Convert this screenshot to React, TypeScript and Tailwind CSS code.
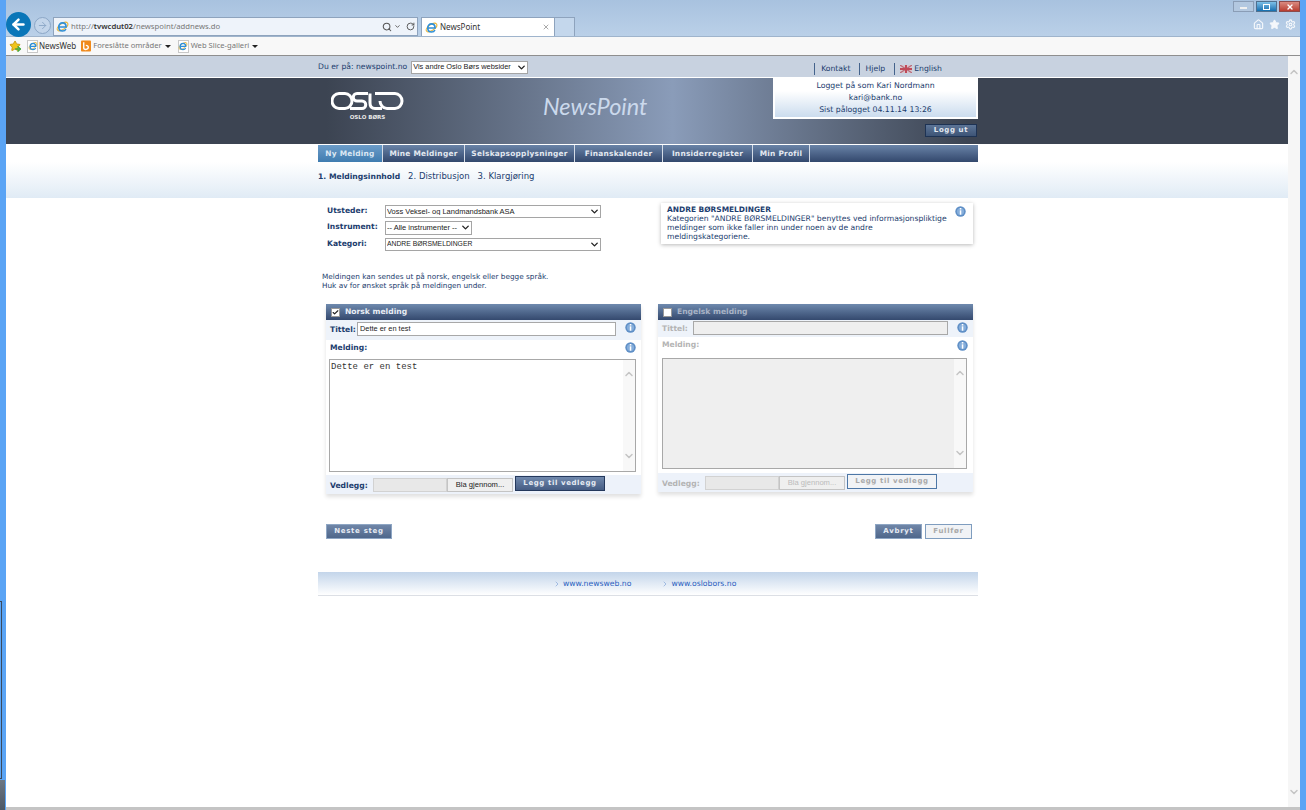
import { ChevronDown, ChevronUp, ChevronRight, ArrowLeft, ArrowRight, Search, RotateCw, X, Home, Star, Settings, Check } from 'lucide-react'

const navItems = [
  { label: 'Ny Melding', width: 'w-[65px]' },
  { label: 'Mine Meldinger', width: 'w-[82px]' },
  { label: 'Selskapsopplysninger', width: 'w-[110px]' },
  { label: 'Finanskalender', width: 'w-[88px]' },
  { label: 'Innsiderregister', width: 'w-[90px]' },
  { label: 'Min Profil', width: 'w-[57px]' },
]

function IeLogo({ size = 14 }: { size?: number }) {
  return (
    <svg width={size} height={size} viewBox="0 0 16 16" className="shrink-0">
      <ellipse cx="8" cy="8" rx="7.5" ry="3.6" transform="rotate(-35 8 8)" fill="none" stroke="#e8b53a" strokeWidth="1.4" />
      <path d="M3.6 8.6h8.8c0-3-1.8-5-4.4-5s-4.6 2.2-4.6 5c0 2.9 2 5 4.7 5 1.9 0 3.4-.9 4.1-2.5" fill="none" stroke="#2f8fd8" strokeWidth="2" />
    </svg>
  )
}

function IePage() {
  return (
    <span className="relative flex h-[13px] w-[11px] shrink-0 items-center justify-center border border-[#c8c8c8] bg-white">
      <IeLogo size={10} />
    </span>
  )
}

function BingIcon() {
  return (
    <svg width="10" height="12" viewBox="0 0 11 12" className="shrink-0">
      <rect width="11" height="12" rx="1" fill="#f08a1d" />
      <path d="M3 2v6.2c0 1 1 1.6 2.2 1.6C6.900 9.800 8 8.800 8 7.500S6.800 5.300 5.300 5.300" fill="none" stroke="#fff" strokeWidth="1.5" />
    </svg>
  )
}

function FavStar() {
  return (
    <span className="relative h-[13px] w-[13px] shrink-0">
      <Star className="h-[12px] w-[12px] fill-[#f0c419] text-[#c99a10]" />
      <ArrowRight className="absolute bottom-0 right-0 h-[8px] w-[8px] text-[#3fa83a]" strokeWidth={4} />
    </span>
  )
}

function InfoIcon() {
  return (
    <svg width="11" height="11" viewBox="0 0 11 11" className="shrink-0">
      <circle cx="5.5" cy="5.5" r="5.2" fill="#5f8fc6" />
      <circle cx="5.5" cy="5.5" r="3.6" fill="#86aedb" />
      <rect x="4.8" y="2" width="1.5" height="1.5" fill="#fff" />
      <rect x="4.8" y="4.3" width="1.5" height="4.4" fill="#fff" />
    </svg>
  )
}

function OsloLogo() {
  return (
    <svg width="73" height="18" viewBox="0 0 73 18" fill="none" stroke="#fff" strokeWidth="3">
      <path d="M8 1.500h6a7 7.500 0 0 1 0 15H8a7 7.500 0 0 1 0-15z" />
      <path d="M37 1.500H26a3.700 3.700 0 0 0 0 7.500h5a3.700 3.700 0 0 1 0 7.500H19" />
      <path d="M39 1.500v9.500c0 3.500 2 5.500 5 5.500h7" />
      <path d="M44 1.500h20a7 7.500 0 0 1 0 15H56a7 7.500 0 0 1-7-7.500" />
    </svg>
  )
}

function UkFlag() {
  return (
    <svg width="12" height="8" viewBox="0 0 12 8" className="mr-[2px] shrink-0">
      <rect width="12" height="8" fill="#d8c4cc" />
      <path d="M0 0l12 8M12 0L0 8" stroke="#b86a78" strokeWidth="1.2" />
      <path d="M6 0v8M0 4h12" stroke="#c04a58" strokeWidth="2" />
    </svg>
  )
}

function Select({ label, width, height = 'h-[13px]', size = 'text-[7.5px]' }: { label: string; width: string; height?: string; size?: string }) {
  return (
    <div className={`relative ${height} ${width}`}>
      <select className={`h-full w-full appearance-none border border-[#a5a5a5] bg-white pl-[1px] font-['Liberation_Sans',sans-serif] font-normal leading-none text-[#222] outline-none ${size}`}>
        <option>{label}</option>
      </select>
      <ChevronDown className="pointer-events-none absolute right-[1px] top-[1px] h-[11px] w-[11px] text-[#222]" strokeWidth={3} />
    </div>
  )
}

function MessagePanel({ title, checked, value, text }: { title: string; checked: boolean; value: string; text: string }) {
  const label = checked ? 'text-[#1c3d6e]' : 'text-[#b4b4b4]'
  return (
    <div className="flex w-[315px] flex-col shadow-[0_3px_4px_rgba(0,0,0,0.12)]">
      <div className="flex h-[16px] items-center gap-[5px] bg-gradient-to-b from-[#6f8aae] to-[#34496e] pl-[5px]">
        <span className="flex h-[9px] w-[9px] items-center justify-center border border-[#999] bg-white">
          {checked && <Check className="h-[9px] w-[9px] text-[#222]" strokeWidth={4} />}
        </span>
        <span className={`text-[7.6px] font-bold ${checked ? 'text-[#e8edf5]' : 'text-[#a9b4c6]'}`}>{title}</span>
      </div>
      <div className={`flex items-center bg-[#eef3fa] pl-[4px] pr-[5px] ${checked ? 'h-[20px]' : 'h-[17px]'}`}>
        <span className={`w-[27px] text-[7.6px] font-bold ${label}`}>Tittel:</span>
        <input
          readOnly
          value={value}
          className={`h-[14px] flex-1 border border-[#a8a8a8] px-[2px] font-['Liberation_Sans',sans-serif] text-[7.4px] text-[#222] outline-none ${checked ? 'mb-[3px] bg-white' : 'mb-[2px] ml-[4px] bg-[#efefef]'}`}
        />
        <span className={`ml-[9px] ${checked ? 'mb-[5px]' : 'mb-[2px]'}`}><InfoIcon /></span>
      </div>
      <div className={`flex items-center justify-between bg-white pl-[4px] pr-[5px] ${checked ? 'h-[15px]' : 'h-[16px]'}`}>
        <span className={`text-[7.6px] font-bold ${label}`}>Melding:</span>
        <InfoIcon />
      </div>
      <div className={`bg-white ${checked ? 'pb-[3px] pl-[3px] pr-[5px] pt-[4px]' : 'pb-[4px] pl-[4px] pr-[6px] pt-[5px]'}`}>
        <div className={`relative border border-[#a8a8a8] ${checked ? 'h-[113px] bg-white' : 'h-[111px] bg-[#efefef]'}`}>
          <textarea
            readOnly
            value={text}
            className="h-full w-full resize-none overflow-hidden bg-transparent px-[1px] pt-[2px] font-['Liberation_Mono',monospace] text-[9px] leading-[11px] text-[#333] outline-none"
          />
          <div className="absolute bottom-0 right-0 top-0 flex w-[12px] flex-col items-center justify-between bg-[#f8f8f8] pb-[9px] pt-[8px] text-[#c4c4c4]">
            <ChevronUp className="h-[12px] w-[12px]" strokeWidth={3} />
            <ChevronDown className="h-[12px] w-[12px]" strokeWidth={3} />
          </div>
        </div>
      </div>
      <div className="flex h-[19px] items-center bg-[#edf2fa] pl-[4px]">
        <span className={`mt-[3px] w-[43px] text-[7.6px] font-bold ${label}`}>Vedlegg:</span>
        <div className="mt-[1px] h-[14px] w-[74px] border border-[#d2d2d2] bg-[#e8e8e8]" />
        <div className={`mt-[1px] flex h-[14px] w-[66px] items-center justify-center border border-[#c4c4c4] bg-[#efefef] font-['Liberation_Sans',sans-serif] text-[7.6px] ${checked ? 'text-[#222]' : 'text-[#bbb]'}`}>Bla gjennom...</div>
        <button className={`mb-[2px] ml-[2px] h-[15px] w-[90px] border text-[7px] font-bold tracking-[0.6px] ${checked ? 'border-[#24385c] bg-gradient-to-b from-[#7088ac] to-[#465d84] text-[#e6ebf3]' : 'border-[#4d77a6] bg-[#f1f3f6] text-[#a9a9a9]'}`}>Legg til vedlegg</button>
      </div>
    </div>
  )
}

export default function App() {
  return (
    <div className="relative flex h-[810px] w-[1306px] overflow-hidden bg-[#5aa4f5] font-['DejaVu_Sans',Verdana,sans-serif]">
      <div className="ml-[6px] flex w-[1294px] flex-col bg-white">
        {/* browser chrome */}
        <div className="flex h-[37px] justify-between border-b border-[#9fb4cc] bg-gradient-to-b from-[#a8c2df] to-[#bad0e8] font-['Noto_Sans',sans-serif]">
          <div className="flex items-end">
            <span className="relative z-10 -mb-[1px] flex h-[25px] w-[25px] items-center justify-center rounded-full bg-[#0a76b8]">
              <ArrowLeft className="h-[17px] w-[17px] text-white" strokeWidth={3.5} />
            </span>
            <span className="mb-[2px] ml-[3px] flex h-[17px] w-[17px] items-center justify-center rounded-full border border-[#8ba6c6] bg-[#c3d5ea]">
              <ArrowRight className="h-[11px] w-[11px] text-[#8ba6c6]" strokeWidth={2} />
            </span>
            <div className="ml-[2px] flex h-[19px] w-[365px] items-center border border-[#8ea3bd] bg-[#eef3fa] pl-[2px] pr-[2px] text-[7.7px] text-[#777]">
              <IeLogo size={13} />
              <span className="ml-[2px]">http://<b className="font-semibold text-[#333]">tvwcdut02</b>/newspoint/addnews.do</span>
              <span className="ml-auto flex items-center gap-[2px] text-[#555]">
                <Search className="h-[10px] w-[10px]" strokeWidth={2.5} />
                <ChevronDown className="h-[7px] w-[7px]" strokeWidth={3} />
                <RotateCw className="ml-[3px] h-[9px] w-[9px]" strokeWidth={2.5} />
              </span>
            </div>
            <div className="ml-[3px] flex h-[19px] w-[134px] items-center border border-b-0 border-[#8ea3bd] bg-white pl-[3px] pr-[4px] text-[8px] text-[#333]">
              <IeLogo size={13} />
              <span className="ml-[2px]">NewsPoint</span>
              <X className="ml-auto h-[8px] w-[8px] text-[#aaa]" strokeWidth={3} />
            </div>
            <div className="h-[19px] w-[20px] border border-b-0 border-l-0 border-[#8ea3bd] bg-[#c4d7ec]" />
          </div>
          <div className="flex flex-col items-end pt-[1px]">
            <div className="flex gap-[2px]">
              <span className="flex h-[11px] w-[21px] items-end justify-center border border-[#8a9db6] bg-[#b3c8e0] pb-[2px]"><span className="h-[2px] w-[7px] bg-[#f0f0f0]" /></span>
              <span className="flex h-[11px] w-[21px] items-center justify-center border border-[#50708f] bg-gradient-to-b from-[#7cc0e8] to-[#0f6fb0]"><span className="h-[6px] w-[7px] border border-white" /></span>
              <span className="flex h-[11px] w-[21px] items-center justify-center border border-[#8c4a4a] bg-gradient-to-b from-[#d98a80] to-[#b83c30]"><X className="h-[8px] w-[8px] text-white" strokeWidth={4} /></span>
            </div>
            <div className="mr-[4px] mt-[7px] flex gap-[5px] text-[#f4f7fb]">
              <Home className="h-[11px] w-[11px]" strokeWidth={2.5} />
              <Star className="h-[11px] w-[11px] fill-[#f4f7fb]" strokeWidth={2} />
              <Settings className="h-[11px] w-[11px]" strokeWidth={2.5} />
            </div>
          </div>
        </div>
        <div className="flex h-[19px] items-center border-b border-[#8f8f8f] bg-[#f8f8f8] pl-[3px] font-['Noto_Sans',sans-serif] text-[7.6px] text-[#777]">
          <FavStar />
          <span className="ml-[5px]"><IePage /></span>
          <span className="ml-[1px] text-[8px] text-[#333]">NewsWeb</span>
          <span className="ml-[5px]"><BingIcon /></span>
          <span className="ml-[2px]">Foreslåtte områder</span>
          <span className="ml-[3px] h-0 w-0 border-x-[3px] border-t-[3px] border-x-transparent border-t-[#222]" />
          <span className="ml-[7px]"><IePage /></span>
          <span className="ml-[2px]">Web Slice-galleri</span>
          <span className="ml-[3px] h-0 w-0 border-x-[3px] border-t-[3px] border-x-transparent border-t-[#222]" />
        </div>

        <div className="flex flex-1">
          {/* page */}
          <div className="flex w-[1282px] flex-col">
            <div className="h-[22px] border-b border-white bg-[#c8d2e0]">
              <div className="ml-[312px] flex h-full w-[660px] items-center pt-[1px] text-[7.65px] text-[#1c3d6e]">
                <span>Du er på: newspoint.no</span>
                <div className="ml-[4px]"><Select label="Vis andre Oslo Børs websider" width="w-[117px]" size="text-[7.4px]" /></div>
                <div className="ml-auto mr-[36px] mt-[4px] flex items-center text-[7.7px]">
                  <span className="border-l border-[#44638c] pl-[6px]">Kontakt</span>
                  <span className="ml-[8px] border-l border-[#44638c] pl-[6px]">Hjelp</span>
                  <span className="ml-[9px] flex items-center border-l border-[#44638c] pl-[5px]"><UkFlag />English</span>
                </div>
              </div>
            </div>
            <div className="mb-[1px] h-[66px] bg-gradient-to-r from-[#3c4452] from-[25%] via-[#8a9cb9] via-[52%] to-[#3c4452] to-[75%]">
              <div className="ml-[312px] flex h-full w-[660px]">
                <div className="ml-[13px] mt-[14px] flex w-[73px] flex-col items-center">
                  <OsloLogo />
                  <span className="mt-[3px] text-[5.5px] font-bold text-[#e8e8e8]">OSLO BØRS</span>
                </div>
                <span className="ml-[139px] mt-[13px] font-['Lato',sans-serif] text-[23.500px] italic leading-[30px] text-[#cbd9ec]">NewsPoint</span>
                <div className="ml-auto flex w-[205px] flex-col items-end">
                  <div className="-mt-px flex h-[42px] w-full flex-col items-center justify-center border-2 border-t-0 border-white bg-gradient-to-b from-white from-[35%] to-[#cbdcee] pt-[1px] text-[7.75px] leading-[12px] text-[#1c3d6e]">
                    <span>Logget på som Kari Nordmann</span>
                    <span>kari@bank.no</span>
                    <span>Sist pålogget 04.11.14 13:26</span>
                  </div>
                  <button className="mr-[1px] mt-[5px] h-[13px] w-[52px] border border-[#1e3354] bg-gradient-to-b from-[#5d7597] to-[#3d5476] text-[7px] font-bold tracking-[0.6px] text-[#e4e9f1]">Logg ut</button>
                </div>
              </div>
            </div>
            <div className="ml-[312px] flex h-[17px] w-[660px] bg-gradient-to-b from-[#6a84a8] to-[#33486d]">
              {navItems.map((item, i) => (
                <div key={item.label} className={`flex h-full items-center justify-center border-r border-[#d5dce6] text-[7.4px] font-bold tracking-[0.25px] ${item.width} ${i === 0 ? 'bg-gradient-to-b from-[#6c9cc8] to-[#3f7cb0] text-[#dce8f4]' : 'text-[#e4e9f1]'}`}>
                  {item.label}
                </div>
              ))}
            </div>
            <div className="h-[36px] bg-gradient-to-b from-white to-[#e0ebf5]">
              <div className="ml-[312px] flex w-[660px] gap-[8px] pt-[8px] text-[8.5px] text-[#1c3d6e]">
                <b className="text-[7.65px] leading-[13px]">1. Meldingsinnhold</b>
                <span>2. Distribusjon</span>
                <span>3. Klargjøring</span>
              </div>
            </div>

            <div className="ml-[312px] w-[660px] pl-[8px]">
              <div className="flex pt-[7px]">
                <div className="ml-[1px] grid w-[274px] grid-cols-[58px_auto] content-start justify-start gap-y-[3px] text-[7.6px] font-bold text-[#1c3d6e]">
                  <span className="leading-[11px]">Utsteder:</span>
                  <Select label="Voss Veksel- og Landmandsbank ASA" width="w-[216px]" />
                  <span className="leading-[11px]">Instrument:</span>
                  <Select label="-- Alle instrumenter --" width="w-[87px]" height="h-[14px]" />
                  <span className="leading-[11px]">Kategori:</span>
                  <Select label="ANDRE BØRSMELDINGER" width="w-[216px]" size="text-[6.8px]" />
                </div>
                <div className="-mt-[2px] ml-[60px] flex h-[41px] w-[312px] items-start bg-white pl-[6px] pr-[7px] pt-[2px] text-[7.65px] leading-[9px] text-[#1c3d6e] shadow-[0_1px_4px_rgba(0,0,0,0.28)]">
                  <div className="flex-1">
                    <b className="block text-[7.45px]">ANDRE BØRSMELDINGER</b>
                    Kategorien "ANDRE BØRSMELDINGER" benyttes ved informasjonspliktige<br />
                    meldinger som ikke faller inn under noen av de andre<br />
                    meldingskategoriene.
                  </div>
                  <span className="mt-[1px]"><InfoIcon /></span>
                </div>
              </div>
              <p className="-ml-[4px] mt-[21px] text-[7.300px] leading-[9px] text-[#1c3d6e]">
                Meldingen kan sendes ut på norsk, engelsk eller begge språk.<br />Huk av for ønsket språk på meldingen under.
              </p>
              <div className="mt-[14px] flex items-start gap-[17px]">
                <MessagePanel title="Norsk melding" checked value="Dette er en test" text="Dette er en test" />
                <MessagePanel title="Engelsk melding" checked={false} value="" text="" />
              </div>
              <div className="mt-[30px] flex w-[646px] items-center justify-between">
                <button className="h-[15px] w-[66px] border border-[#8ea6c4] bg-gradient-to-b from-[#6f86a8] to-[#4f678b] text-[7px] font-bold tracking-[0.7px] text-[#e6ebf3]">Neste steg</button>
                <div className="flex gap-[3px]">
                  <button className="h-[15px] w-[47px] border border-[#8ea6c4] bg-gradient-to-b from-[#6f86a8] to-[#4f678b] text-[7px] font-bold tracking-[0.7px] text-[#e6ebf3]">Avbryt</button>
                  <button className="h-[15px] w-[47px] border border-[#7f9dbf] bg-[#f1f3f6] text-[7px] font-bold tracking-[0.7px] text-[#a9a9a9]">Fullfør</button>
                </div>
              </div>
            </div>
            <div className="ml-[312px] mt-[33px] flex h-[24px] w-[660px] items-center border-b border-[#dcdfe5] bg-gradient-to-b from-[#c3d5ea] to-white pl-[235px] text-[7.7px] text-[#2a5fc0]">
              <ChevronRight className="h-[8px] w-[8px] text-[#7fa3d8]" />
              <span className="ml-[2px]">www.newsweb.no</span>
              <ChevronRight className="ml-[30px] h-[8px] w-[8px] text-[#7fa3d8]" />
              <span className="ml-[2px]">www.oslobors.no</span>
            </div>
          </div>
          {/* page scrollbar */}
          <div className="flex w-[12px] flex-col items-center justify-between bg-[#f6f6f6] pb-[9px] pt-[10px] text-[#c4c4c4]">
            <ChevronUp className="h-[12px] w-[12px]" strokeWidth={3} />
            <ChevronDown className="h-[12px] w-[12px]" strokeWidth={3} />
          </div>
        </div>
        <div className="h-[3px] bg-[#c4c4c4]" />
      </div>
      {/* window behind the browser, showing at the left edge */}
      <div className="absolute left-0 top-[601px] h-[178px] w-[2px] border-y border-r border-[#3a4a5e]" />
      <div className="absolute bottom-0 left-0 h-[30px] w-[5px] bg-gradient-to-b from-[#6d7783] to-[#4d5866]" />
    </div>
  )
}
